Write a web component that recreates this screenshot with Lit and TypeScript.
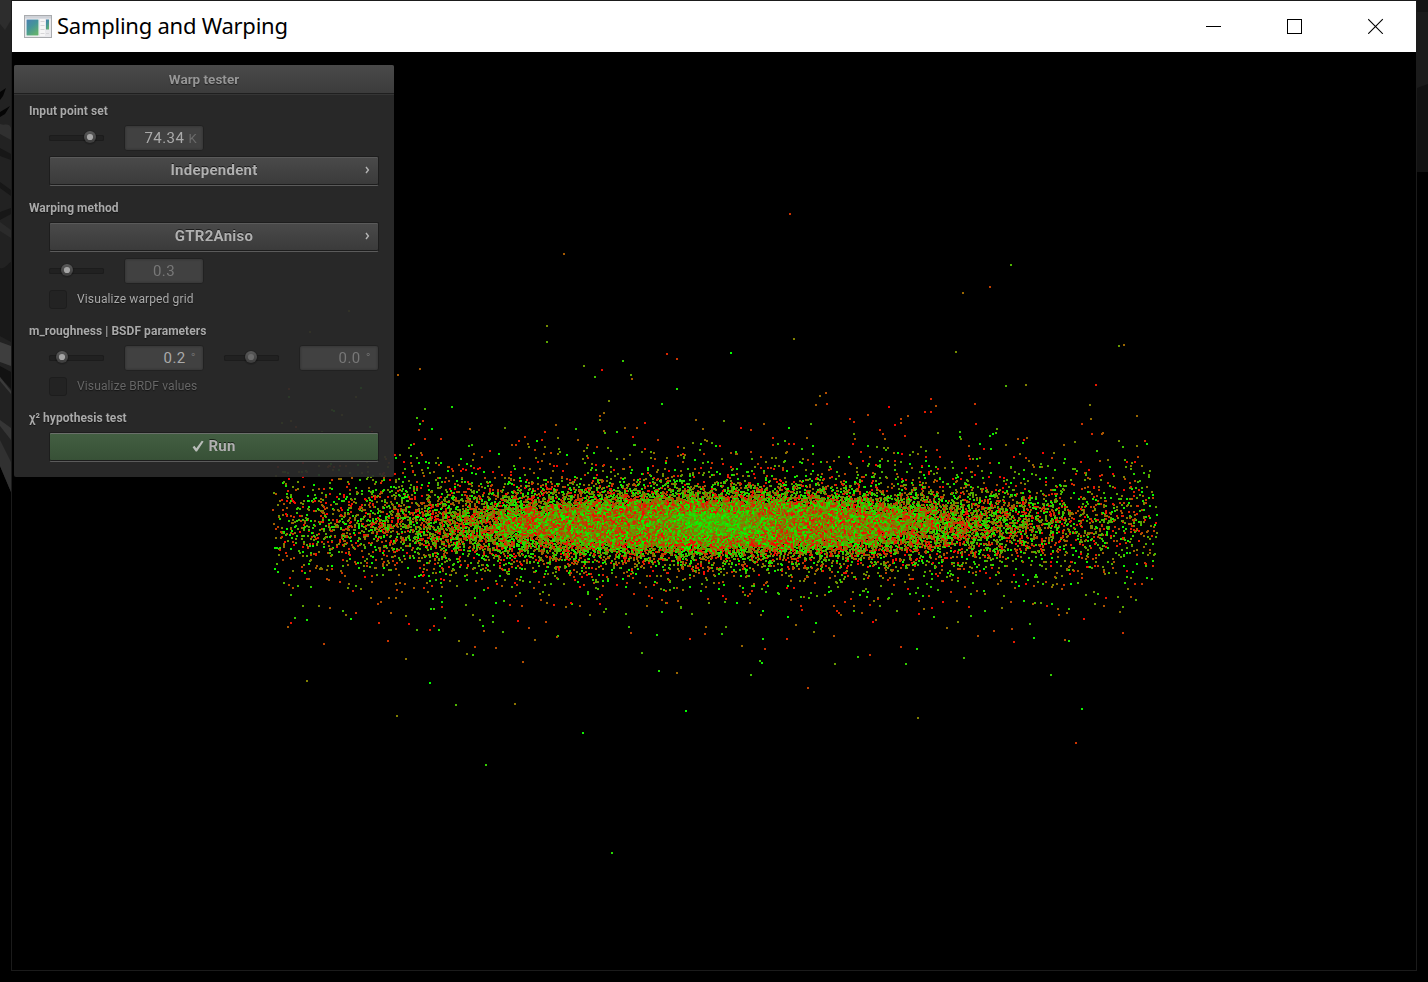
import { LitElement, html, css, svg } from "lit";
import { customElement, property } from "lit/decorators.js";

/* Isolated samples: x, y, green share in percent. */
const SPARSE: number[] = [
  790, 214, 20, 564, 254, 35, 1011, 265, 70, 990, 287, 25, 963, 293, 40, 547, 326, 55, 547, 342, 65,
  794, 339, 50, 731, 353, 100, 667, 354, 15, 677, 359, 20, 623, 361, 80, 584, 366, 60, 602, 370, 5,
  595, 377, 75, 631, 375, 65, 632, 379, 35, 420, 369, 35, 398, 375, 35, 956, 352, 55, 1119, 346, 60,
  1124, 345, 40, 677, 389, 90, 662, 404, 90, 609, 401, 55, 604, 413, 40, 600, 416, 30, 600, 420, 55,
  452, 407, 90, 425, 409, 72, 417, 418, 75, 423, 421, 20, 420, 424, 90, 820, 396, 42, 826, 393, 30,
  816, 405, 35, 827, 404, 20, 889, 407, 0, 931, 399, 15, 936, 406, 30, 925, 412, 10, 931, 412, 10,
  975, 404, 20, 1006, 386, 70, 1026, 385, 50, 1096, 385, 10, 1090, 405, 50, 1091, 419, 42, 1137, 416, 40,
  868, 415, 25, 850, 419, 15, 854, 422, 15, 901, 419, 25, 908, 416, 30, 901, 423, 25, 811, 424, 70,
  764, 424, 35, 724, 421, 60, 696, 420, 40, 645, 423, 8, 556, 425, 35, 1082, 424, 20, 976, 424, 10,
  895, 425, 0, 324, 644, 25, 388, 641, 20, 430, 630, 10, 417, 630, 70, 439, 630, 90, 484, 631, 30,
  503, 632, 70, 459, 641, 50, 475, 647, 25, 496, 648, 30, 467, 654, 50, 473, 655, 80, 406, 659, 45,
  523, 662, 30, 307, 681, 50, 430, 683, 100, 456, 705, 70, 515, 704, 45, 397, 716, 50, 583, 733, 95,
  486, 765, 80, 612, 853, 85, 686, 711, 100, 677, 673, 40, 659, 671, 90, 642, 653, 70, 558, 636, 80,
  557, 637, 30, 535, 640, 40, 631, 633, 25, 657, 635, 90, 690, 639, 15, 705, 634, 25, 722, 634, 80,
  763, 639, 95, 765, 649, 20, 742, 646, 40, 787, 639, 15, 760, 661, 80, 762, 663, 95, 751, 675, 75,
  808, 688, 25, 814, 632, 50, 834, 636, 30, 835, 664, 60, 858, 657, 80, 870, 655, 20, 901, 647, 20,
  917, 649, 90, 906, 664, 80, 964, 658, 75, 978, 636, 30, 994, 631, 25, 1014, 642, 10, 1034, 638, 95,
  1065, 640, 30, 1069, 641, 90, 1123, 633, 20, 1051, 675, 80, 1082, 709, 95, 1076, 743, 20, 918, 718, 50,
  349, 311, 50, 310, 332, 50, 323, 349, 60, 338, 346, 50, 302, 351, 5, 289, 389, 20, 361, 388, 95,
  289, 397, 85, 356, 397, 50, 332, 410, 70, 334, 411, 90, 342, 415, 50, 291, 421, 45, 282, 423, 60,
  296, 427, 20,
];

function makeRandom(seed: number): () => number {
  let s = seed;
  return () => {
    s = (s + 0x6d2b79f5) | 0;
    let t = Math.imul(s ^ (s >>> 15), 1 | s);
    t = (t + Math.imul(t ^ (t >>> 7), 61 | t)) ^ t;
    return ((t ^ (t >>> 14)) >>> 0) / 4294967296;
  };
}

/* Scatter of anisotropic GTR2 normals seen from above the hemisphere. */
@customElement("warp-viewport")
class WarpViewport extends LitElement {
  static styles = css`
    :host { display: block; width: 1404px; height: 918px; }
    .plot { display: block; width: 1404px; height: 918px; }
  `;

  render() {
    return html`<canvas class="plot" width="1404" height="918"></canvas>`;
  }

  firstUpdated() {
    const canvas = this.renderRoot.querySelector("canvas") as HTMLCanvasElement;
    const ctx = canvas.getContext("2d")!;
    ctx.fillStyle = "#000";
    ctx.fillRect(0, 0, 1404, 918);
    const dot = (x: number, y: number, g: number) => {
      ctx.fillStyle = `rgb(${Math.round(255 * (1 - g))},${Math.round(255 * g)},0)`;
      ctx.fillRect(Math.round(x) - 1, Math.round(y) - 1, 2, 2);
    };
    const rnd = makeRandom(7434);
    const ax = 0.235;
    const ay = 0.0255;
    const points: number[][] = [];
    for (let i = 0; i < 74340; i++) {
      const r = rnd();
      const phi = rnd() * Math.PI * 2;
      const g = rnd();
      const t = Math.sqrt(r / (1 - r));
      const sx = t * ax * Math.cos(phi);
      const sy = t * ay * Math.sin(phi);
      const n = Math.sqrt(1 + sx * sx + sy * sy);
      const x = 702.5 + (442.5 * sx) / n;
      const y = 472.5 + (442.5 * sy) / n;
      if (y < 375 || y > 577) continue;
      points.push([x, y, g, r]);
    }
    /* Samples nearest the pole lean to green. */
    for (const [x, y, g, r] of points) {
      const pole = Math.exp(-(((x - 702) / 55) ** 2) - ((y - 466) / 26) ** 2);
      dot(x, y, r < 0.5 ? g + (1 - g) * 0.5 * pole : g);
    }
    for (let i = 0; i < SPARSE.length; i += 3) {
      dot(SPARSE[i] - 12, SPARSE[i + 1] - 52, SPARSE[i + 2] / 100);
    }
  }
}

@customElement("warp-slider")
class WarpSlider extends LitElement {
  @property({ type: Number }) value = 0;
  @property({ type: Boolean }) off = false;

  static styles = css`
    :host { display: block; width: 59px; height: 18px; }
    svg { display: block; }
  `;

  render() {
    const cx = 2 + this.value;
    return html`<svg width="59" height="18" viewBox="0 1 59 18">
      <defs>
        <linearGradient id="k" x1="0" y1="0" x2="0" y2="1">
          <stop offset="0" stop-color="#5a5a5a" /><stop offset="1" stop-color="#3c3c3c" />
        </linearGradient>
        <radialGradient id="s"><stop offset=".6" stop-color="#000" stop-opacity=".35" /><stop offset="1" stop-color="#000" stop-opacity="0" /></radialGradient>
      </defs>
      <rect x="2" y="7" width="55" height="6" rx="1.5" fill="#1c1c1c" />
      <rect x="3" y="8" width="53" height="4" rx="1" fill="#212121" />
      <circle cx=${cx} cy="9.5" r="8" fill="url(#s)" />
      <circle cx=${cx} cy="9" r="6" fill="url(#k)" />
      <circle cx=${cx} cy="9" r="3.1" fill=${this.off ? "#6a6a6a" : "#a5a5a5"} />
    </svg>`;
  }
}

const chevron = svg`<path d="M1 1 L3.4 4 L1 7" fill="none" stroke="#b4b4b4" stroke-width="1.4" />`;

@customElement("app-root")
class AppRoot extends LitElement {
  static styles = css`
    :host {
      display: grid;
      grid-template-columns: 11px 1406px 11px;
      grid-template-rows: 971px 11px;
      width: 1428px;
      height: 982px;
      overflow: hidden;
      background: #000;
      font-family: Roboto, "Liberation Sans", sans-serif;
    }
    svg { display: block; flex: none; }
    .window {
      box-sizing: border-box;
      width: 1406px;
      height: 971px;
      border: 1px solid #1b1b1b;
      background: #000;
    }
    .titlebar {
      box-sizing: border-box;
      display: flex;
      align-items: center;
      height: 51px;
      padding: 0 32px 0 12px;
      background: #fff;
      color: #000;
    }
    .caption {
      margin-left: 5px;
      padding-bottom: 3px;
      font: 22px/30px "Noto Sans", "Open Sans", sans-serif;
      letter-spacing: -0.25px;
      white-space: nowrap;
      flex: 1;
    }
    .controls { display: flex; gap: 65px; padding-bottom: 2px; }
    .client { display: grid; height: 918px; }
    .client > * { grid-area: 1 / 1; }
    .panel {
      z-index: 1;
      box-sizing: border-box;
      width: 380px;
      height: 412px;
      margin: 13px 0 0 2px;
      border-radius: 2px;
      background: rgba(43, 43, 43, 0.92);
      color: #a9a9a9;
      text-shadow: 0 1px 1px rgba(0, 0, 0, 0.5);
      overflow: hidden;
    }
    .header {
      box-sizing: border-box;
      height: 30px;
      border-bottom: 1px solid #353535;
      background: linear-gradient(#4a4a4a, #3b3b3b);
      box-shadow: inset 0 -1px 0 #1f1f1f;
      font-size: 13.5px;
      line-height: 29px;
      font-weight: 700;
      text-align: center;
      color: #969696;
    }
    .body { display: flex; flex-direction: column; padding: 0 15px; }
    .label { height: 16px; line-height: 16px; font-size: 12px; letter-spacing: 0.06px; font-weight: 700; white-space: nowrap; }
    .l1 { margin-top: 8px; }
    .l2 { margin-top: 14px; }
    .l3 { margin-top: 14px; }
    .l4 { margin-top: 14px; }
    .row { display: flex; align-items: center; height: 26px; margin-left: 18px; }
    .r1 { margin-top: 6px; }
    .r2 { margin-top: 6px; }
    .r3 { margin-top: 6px; }
    .value {
      box-sizing: border-box;
      display: flex;
      align-items: center;
      justify-content: flex-end;
      width: 80px;
      height: 26px;
      margin-left: 18px;
      padding-right: 6px;
      border: 1px solid #212121;
      border-radius: 3px;
      background: #414141;
      box-shadow: inset 0 0 2px 1px #373737;
      font-size: 15px;
      letter-spacing: 0.45px;
      color: #aaa;
      text-shadow: none;
    }
    .value.mid { justify-content: center; padding: 0; }
    .dim { color: #777; }
    .unit { margin-left: 4px; color: #6b6b6b; font-size: 13px; }
    .deg { margin-left: 5px; margin-right: 1px; margin-top: -2px; }
    .second { margin-left: 18px; }
    .button {
      box-sizing: border-box;
      display: grid;
      grid-template-columns: 20px 1fr 20px;
      align-items: center;
      height: 30px;
      margin-left: 20px;
      width: 330px;
      padding-bottom: 2px;
      border: 1px solid #1d1d1d;
      border-bottom-color: #5b5b5b;
      border-radius: 2px;
      background: linear-gradient(#4a4a4a, #3a3a3a);
      box-shadow: inset 0 1px 0 #5a5a5a, inset 0 -1px 0 #1d1d1d;
      font-size: 15px;
      letter-spacing: 0.25px;
      font-weight: 700;
      line-height: 26px;
      color: #b0b0b0;
      text-align: center;
      text-shadow: 0 -1px 0 rgba(0, 0, 0, 0.6);
    }
    .button > svg { justify-self: end; margin-right: 8px; }
    .b1 { margin-top: 5px; }
    .b2 { margin-top: 6px; }
    .run {
      background: linear-gradient(#435f42, #375036);
      box-shadow: inset 0 1px 0 #6a6f6a, inset 0 -1px 0 #1d1d1d;
    }
    .runtext { display: flex; justify-content: center; align-items: center; gap: 4px; }
    .check { display: flex; align-items: center; height: 20px; margin-left: 20px; font-size: 12px; letter-spacing: 0.13px; white-space: nowrap; }
    .c1 { margin-top: 5px; }
    .c2 { margin-top: 5px; }
    .box {
      box-sizing: border-box;
      width: 18px;
      height: 19px;
      margin-right: 10px;
      border: 1px solid #1d1d1d;
      border-radius: 3px;
      background: #232323;
    }
    .check.off { color: #666; }
  `;

  render() {
    return html`
      <svg width="11" height="971" viewBox="0 0 11 971">
        <path d="M0 0H11V492L0 466Z" fill="#222" />
        <path d="M0 0H11V20L5 30 0 24Z" fill="#2d2d2d" />
        <path d="M0 92L6 88 3 96 0 100ZM0 112L10 106 5 114 0 117Z" fill="#050505" />
        <path d="M0 124C5 126 9 122 11 128V140L0 134Z" fill="#303030" />
        <path d="M0 148L11 154V160L0 156ZM0 182L11 190V196L0 188ZM0 212L11 208V214L0 220Z" fill="#171717" />
        <path d="M0 222L11 230V238L0 231Z" fill="#2b2b2b" />
        <path d="M0 268C5 270 9 262 11 262V342L0 336Z" fill="#191919" />
        <path d="M0 342L11 346V366L0 362Z" fill="#3e3e3e" />
        <path d="M0 366L11 372V389L0 377Z" fill="#121212" />
        <path d="M0 377L11 391V394L0 381Z" fill="#3a3a3a" />
        <path d="M0 420L11 428V440L0 426Z" fill="#363636" />
        <path d="M0 440L11 462V492L0 466Z" fill="#313131" />
      </svg>
      <div class="window">
        <div class="titlebar">
          <svg width="28" height="24" viewBox="0 0 28 24">
            <defs>
              <linearGradient id="a" x1="0" y1="0" x2=".6" y2="1">
                <stop offset="0" stop-color="#4a7fb0" /><stop offset=".5" stop-color="#45949a" /><stop offset="1" stop-color="#62b070" />
              </linearGradient>
            </defs>
            <rect x=".5" y=".5" width="27" height="22" fill="#e9e9ec" stroke="#a9abae" />
            <rect x="1" y="1" width="26" height="2.5" fill="#cfd2d8" />
            <rect x="2" y="4" width="13" height="17" fill="#fff" />
            <rect x="2.5" y="4.5" width="12" height="16" fill="url(#a)" />
            <rect x="16" y="4" width="5" height="17" fill="#f6f6f6" />
            <path d="M16.5 6.5h4M16.5 10.5h4M16.5 14.5h4M16.5 18.5h4M22 18.5h3" stroke="#d6d6d8" />
            <rect x="22" y="4.5" width="3" height="10" fill="url(#a)" />
          </svg>
          <div class="caption">Sampling and Warping</div>
          <div class="controls">
            <svg width="16" height="16" viewBox="0 0 16 16"><path d="M0 8.5H15" stroke="#000" /></svg>
            <svg width="16" height="16" viewBox="0 0 16 16"><rect x=".5" y="1.5" width="14" height="14" fill="none" stroke="#000" /></svg>
            <svg width="16" height="16" viewBox="0 0 16 16"><path d="M.2 1.2L14.8 15.8M14.8 1.2L.2 15.8" stroke="#000" stroke-width="1.1" /></svg>
          </div>
        </div>
        <div class="client">
          <warp-viewport></warp-viewport>
          <div class="panel">
            <div class="header">Warp tester</div>
            <div class="body">
              <div class="label l1">Input point set</div>
              <div class="row r1">
                <warp-slider .value=${41}></warp-slider>
                <div class="value">74.34<span class="unit">K</span></div>
              </div>
              <div class="button b1"><span></span><span>Independent</span><svg width="5" height="8" viewBox="0 0 5 8">${chevron}</svg></div>
              <div class="label l2">Warping method</div>
              <div class="button b2"><span></span><span>GTR2Aniso</span><svg width="5" height="8" viewBox="0 0 5 8">${chevron}</svg></div>
              <div class="row r2">
                <warp-slider .value=${18}></warp-slider>
                <div class="value mid dim">0.3</div>
              </div>
              <div class="check c1"><span class="box"></span>Visualize warped grid</div>
              <div class="label l3">m_roughness | BSDF parameters</div>
              <div class="row r3">
                <warp-slider .value=${13}></warp-slider>
                <div class="value">0.2<span class="unit deg">°</span></div>
                <warp-slider class="second" .value=${27} off></warp-slider>
                <div class="value dim">0.0<span class="unit deg">°</span></div>
              </div>
              <div class="check off c2"><span class="box"></span>Visualize BRDF values</div>
              <div class="label l4">χ² hypothesis test</div>
              <div class="button run b2">
                <span></span>
                <span class="runtext"><svg width="12" height="12" viewBox="0 0 12 12"><path d="M.6 7.2L2.4 5.8 4.3 8.3 9.8.8 11.6 1.6 5 11.4H3.7Z" fill="#b9bdb9" /></svg>Run</span>
                <span></span>
              </div>
            </div>
          </div>
        </div>
      </div>
      <svg width="11" height="971" viewBox="0 0 11 971">
        <rect width="11" height="172" fill="#111" />
        <path d="M0 0H11V84L0 88Z" fill="#1b1b1b" />
        <rect width="11" height="12" fill="#141414" />
      </svg>
    `;
  }
}
